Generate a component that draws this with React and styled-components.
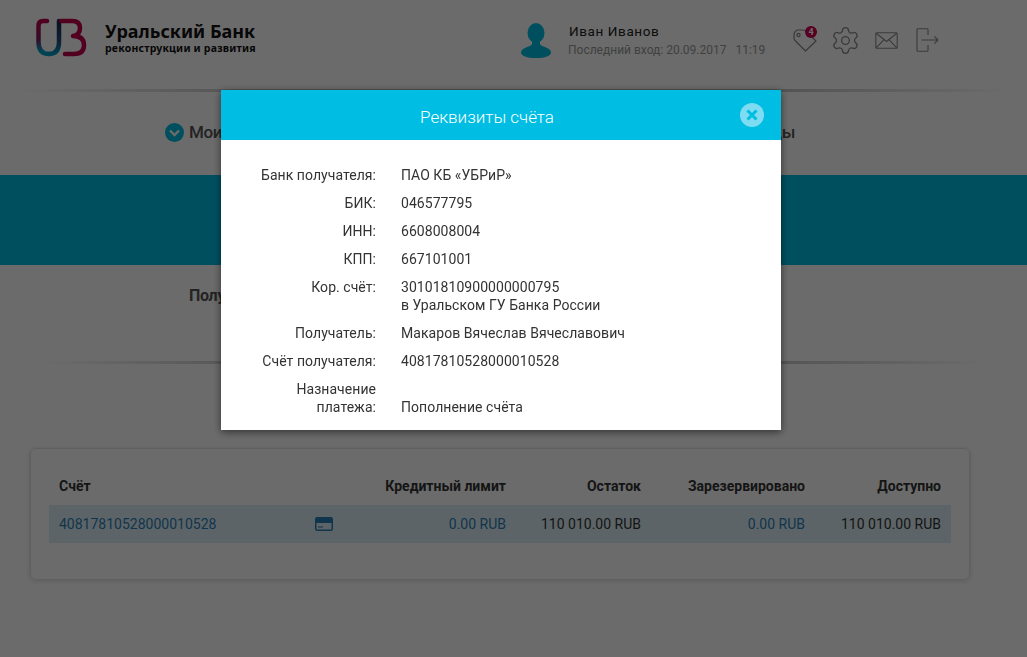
import React from 'react'
import styled, { createGlobalStyle } from 'styled-components'
import { Settings } from 'lucide-react'

const GlobalStyle = createGlobalStyle`
html, body {
  margin: 0;
  padding: 0;
  background: #fff;
  font-family: Roboto, "Liberation Sans", sans-serif;
  color: #333;
  overflow: hidden;
}
`

const Page = styled.div`
width: 1027px;
height: 657px;
overflow: hidden;
`

const Header = styled.header`
height: 89px;
display: flex;
align-items: flex-start;
padding-left: 35px;
box-sizing: border-box;
`

const LogoBlock = styled.div`
display: flex;
align-items: flex-start;
width: 486px;
padding-top: 18px;
`

const LogoText = styled.div`
margin-left: 18px;
margin-top: 3px;
color: #111;
font-family: "Noto Sans", "Open Sans", sans-serif;
font-weight: 700;
`

const LogoTitle = styled.div`
font-size: 18px;
line-height: 20px;
white-space: nowrap;
`

const LogoSub = styled.div`
font-size: 10.5px;
line-height: 12px;
margin-top: 1px;
letter-spacing: 0.2px;
white-space: nowrap;
`

const UserIcon = styled.svg`
width: 30px;
height: 35px;
margin-top: 23px;
flex: none;
`

const UserInfo = styled.div`
margin-left: 18px;
margin-top: 23px;
width: 224px;
flex: none;
`

const UserName = styled.div`
font-size: 13.5px;
line-height: 17px;
letter-spacing: 0.6px;
color: #222;
`

const LastLogin = styled.div`
font-size: 12px;
line-height: 17px;
margin-top: 2px;
margin-left: -1px;
color: #999;
white-space: pre;
`

const IconRow = styled.div`
display: flex;
align-items: center;
margin-top: 24px;
color: #8a8a8a;
`

const IconSlot = styled.div`
width: ${p => p.$w}px;
height: 32px;
display: flex;
align-items: center;
position: relative;
flex: none;
`

const Badge = styled.span`
position: absolute;
left: 12px;
top: 2px;
width: 12px;
height: 12px;
border-radius: 50%;
background: #d1004f;
color: #fff;
font-size: 9px;
font-weight: 700;
line-height: 12px;
text-align: center;
`

const Divider = styled.div`
height: 3px;
margin: ${p => p.$margin};
background: linear-gradient(to right, rgba(0,0,0,0), rgba(0,0,0,0.22) 25%, rgba(0,0,0,0.24) 75%, rgba(0,0,0,0));
`

const Nav = styled.nav`
height: 83px;
box-sizing: border-box;
display: flex;
justify-content: space-between;
align-items: flex-start;
padding: 29px 232px 0 165px;
`

const NavItem = styled.div`
display: flex;
align-items: center;
gap: 5px;
font-size: 17px;
line-height: 22px;
font-weight: 500;
letter-spacing: -0.4px;
color: #555;
white-space: nowrap;
`

const Chevron = styled.svg`
width: 19px;
height: 19px;
flex: none;
`

const Band = styled.div`
height: 90px;
background: #00bde3;
`

const Summary = styled.div`
height: 96px;
padding: 21px 0 0 189px;
box-sizing: border-box;
font-size: 16px;
line-height: 20px;
font-weight: 700;
letter-spacing: -0.3px;
color: #555;
`

const Card = styled.section`
margin: 84px 57px 0 30px;
height: 132px;
box-sizing: border-box;
padding: 28px 18px 0;
border-radius: 6px;
border: 1px solid #e4e4e4;
box-shadow: 0 1px 5px rgba(0,0,0,0.15);
`

const TableRow = styled.div`
display: grid;
grid-template-columns: 281px 166px 135px 164px 136px;
padding: 0 10px;
height: ${p => (p.$head ? 28 : 38)}px;
align-items: ${p => (p.$head ? 'flex-start' : 'center')};
background: ${p => (p.$head ? 'transparent' : '#deeff5')};
`

const HeadCell = styled.div`
font-size: 14px;
line-height: 18px;
font-weight: 700;
text-align: ${p => (p.$left ? 'left' : 'right')};
color: #333;
white-space: nowrap;
`

const Cell = styled.div`
font-size: 14px;
line-height: 18px;
text-align: right;
color: ${p => (p.$link ? '#2a7fb8' : '#333')};
white-space: nowrap;
`

const AccountCell = styled.div`
display: flex;
align-items: center;
justify-content: space-between;
padding-right: 7px;
font-size: 14px;
color: #2a7fb8;
`

const Backdrop = styled.div`
position: fixed;
inset: 0;
background: rgba(0,0,0,0.58);
`

const Modal = styled.div`
position: fixed;
left: 221px;
top: 90px;
width: 560px;
height: 340px;
background: #fff;
box-shadow: 0 2px 8px rgba(0,0,0,0.55);
`

const ModalHead = styled.div`
height: 50px;
background: #00bde3;
color: #fff;
display: flex;
align-items: center;
justify-content: center;
padding: 4px 28px 0 0;
box-sizing: border-box;
font-size: 17px;
font-weight: 300;
position: relative;
`

const CloseButton = styled.button`
position: absolute;
right: 17px;
top: 13px;
width: 24px;
height: 24px;
padding: 0;
border: 0;
border-radius: 50%;
background: #7ddcf2;
display: flex;
align-items: center;
justify-content: center;
`

const ModalBody = styled.dl`
margin: 0;
padding: 26px 0 0 35px;
display: grid;
grid-template-columns: 120px 1fr;
column-gap: 25px;
row-gap: 10px;
font-size: 14px;
line-height: 18px;
letter-spacing: 0.05px;
color: #333;
`

const Label = styled.dt`
text-align: right;
align-self: ${p => (p.$end ? 'end' : 'start')};
`

const Value = styled.dd`
margin: 0;
align-self: ${p => (p.$end ? 'end' : 'start')};
`

const Logo = () => (
  <svg width="52" height="40" viewBox="0 0 52 40" fill="none">
    <defs>
      <linearGradient id="cu" gradientUnits="userSpaceOnUse" x1="0" y1="2" x2="0" y2="38">
        <stop offset="0" stopColor="#c4004a" />
        <stop offset="0.55" stopColor="#7a1f5f" />
        <stop offset="0.85" stopColor="#00a3c8" />
      </linearGradient>
      <linearGradient id="um" gradientUnits="userSpaceOnUse" x1="0" y1="2" x2="0" y2="38">
        <stop offset="0" stopColor="#1a2350" />
        <stop offset="0.6" stopColor="#23507e" />
        <stop offset="1" stopColor="#00a3c8" />
      </linearGradient>
    </defs>
    <path d="M12 3 H8 Q3.5 3 3.5 8 V24 Q3.5 36 14 36" stroke="url(#cu)" strokeWidth="4.5" strokeLinecap="round" />
    <path d="M14 36 Q24 36 24 24 V3" stroke="url(#um)" strokeWidth="4.5" strokeLinecap="round" />
    <path d="M26 3 H37 Q45 3 45 10 Q45 17 38 18 Q49 18 49 27 Q49 36 39 36 H30" stroke="#c4004a" strokeWidth="4.5" strokeLinecap="round" strokeLinejoin="round" />
  </svg>
)

const TagIcon = () => (
  <svg width="24" height="26" viewBox="0 0 24 26" fill="none" stroke="currentColor" strokeWidth="1.2" strokeLinejoin="round">
    <path d="M2 5 Q1 6 1 8 V11 Q1 12.5 2 13.5 L12.5 24 L23 14 L12 3.5 Q11 3 10 3 H5 Q3 3 2 5 Z" />
    <circle cx="5.5" cy="8" r="1.6" />
  </svg>
)

const MailIcon = () => (
  <svg width="23" height="17" viewBox="0 0 23 17" fill="none" stroke="currentColor" strokeWidth="1.1">
    <rect x="0.8" y="0.8" width="21.4" height="15.4" rx="1" />
    <path d="M1.2 1.2 L11.5 9.5 L21.8 1.2 M1.2 15.8 L8.8 7.8 M21.8 15.8 L14.2 7.8" />
  </svg>
)

const ExitIcon = () => (
  <svg width="23" height="24" viewBox="0 0 23 24" fill="none" stroke="currentColor" strokeWidth="1.1" strokeLinejoin="round">
    <path d="M12 7 V1.5 Q12 0.8 11 0.8 H2 Q1 0.8 1 1.5 V22.5 Q1 23.2 2 23.2 H11 Q12 23.2 12 22.5 V17" />
    <path d="M5.5 12 H22 M18.5 8.5 L22 12 L18.5 15.5" />
  </svg>
)

const CardIcon = () => (
  <svg width="18" height="14" viewBox="0 0 18 14">
    <path fill="#2a7fb8" d="M2 0 H16 Q18 0 18 2 V12 Q18 14 16 14 H2 Q0 14 0 12 V2 Q0 0 2 0 Z M1.5 6 V12 Q1.5 12.5 2 12.5 H16 Q16.5 12.5 16.5 12 V6 Z M3 9.5 H8 V10.5 H3 Z" fillRule="evenodd" />
  </svg>
)

const rows = [
  ['Банк получателя:', 'ПАО КБ «УБРиР»'],
  ['БИК:', '046577795'],
  ['ИНН:', '6608008004'],
  ['КПП:', '667101001'],
  ['Кор. счёт:', <>30101810900000000795<br />в Уральском ГУ Банка России</>],
  ['Получатель:', 'Макаров Вячеслав Вячеславович'],
  ['Счёт получателя:', '40817810528000010528'],
]

const App = () => (
  <Page>
    <GlobalStyle />
    <Header>
      <LogoBlock>
        <Logo />
        <LogoText>
          <LogoTitle>Уральский Банк</LogoTitle>
          <LogoSub>реконструкции и развития</LogoSub>
        </LogoText>
      </LogoBlock>
      <UserIcon viewBox="0 0 30 35">
        <ellipse cx="15" cy="10" rx="8.5" ry="10" fill="#00bde3" />
        <path fill="#00bde3" d="M11 17 H19 V21 C19 22 21 23 24 24 C28 25.5 30 27 30 29.5 C30 33 24 35 15 35 C6 35 0 33 0 29.5 C0 27 2 25.5 6 24 C9 23 11 22 11 21 Z" />
      </UserIcon>
      <UserInfo>
        <UserName>Иван Иванов</UserName>
        <LastLogin>Последний вход: 20.09.2017   11:19</LastLogin>
      </UserInfo>
      <IconRow>
        <IconSlot $w={37}><TagIcon /><Badge>4</Badge></IconSlot>
        <IconSlot $w={45}><Settings size={31} strokeWidth={1} /></IconSlot>
        <IconSlot $w={41}><MailIcon /></IconSlot>
        <IconSlot $w={30}><ExitIcon /></IconSlot>
      </IconRow>
    </Header>
    <Divider $margin="0 15px" />
    <Nav>
      <NavItem>
        <Chevron viewBox="0 0 19 19">
          <circle cx="9.5" cy="9.5" r="9.5" fill="#00bde3" />
          <path d="M5 7.5 L9.5 12 L14 7.5" fill="none" stroke="#fff" strokeWidth="2.4" />
        </Chevron>
        Мои счета
      </NavItem>
      <NavItem>Платежи и переводы</NavItem>
    </Nav>
    <Band />
    <Summary>Получатель</Summary>
    <Divider $margin="0 40px" />
    <Card>
      <TableRow $head>
        <HeadCell $left>Счёт</HeadCell>
        <HeadCell>Кредитный лимит</HeadCell>
        <HeadCell>Остаток</HeadCell>
        <HeadCell>Зарезервировано</HeadCell>
        <HeadCell>Доступно</HeadCell>
      </TableRow>
      <TableRow>
        <AccountCell>40817810528000010528<CardIcon /></AccountCell>
        <Cell $link>0.00 RUB</Cell>
        <Cell>110 010.00 RUB</Cell>
        <Cell $link>0.00 RUB</Cell>
        <Cell>110 010.00 RUB</Cell>
      </TableRow>
    </Card>
    <Backdrop />
    <Modal>
      <ModalHead>
        Реквизиты счёта
        <CloseButton aria-label="Закрыть">
          <svg width="12" height="12" viewBox="0 0 12 12">
            <path d="M1.5 1.5 L10.5 10.5 M10.5 1.5 L1.5 10.5" stroke="#00bde3" strokeWidth="3" />
          </svg>
        </CloseButton>
      </ModalHead>
      <ModalBody>
        {rows.map(([label, value]) => (
          <React.Fragment key={label}>
            <Label>{label}</Label>
            <Value>{value}</Value>
          </React.Fragment>
        ))}
        <Label $end>Назначение платежа:</Label>
        <Value $end>Пополнение счёта</Value>
      </ModalBody>
    </Modal>
  </Page>
)

export default App
